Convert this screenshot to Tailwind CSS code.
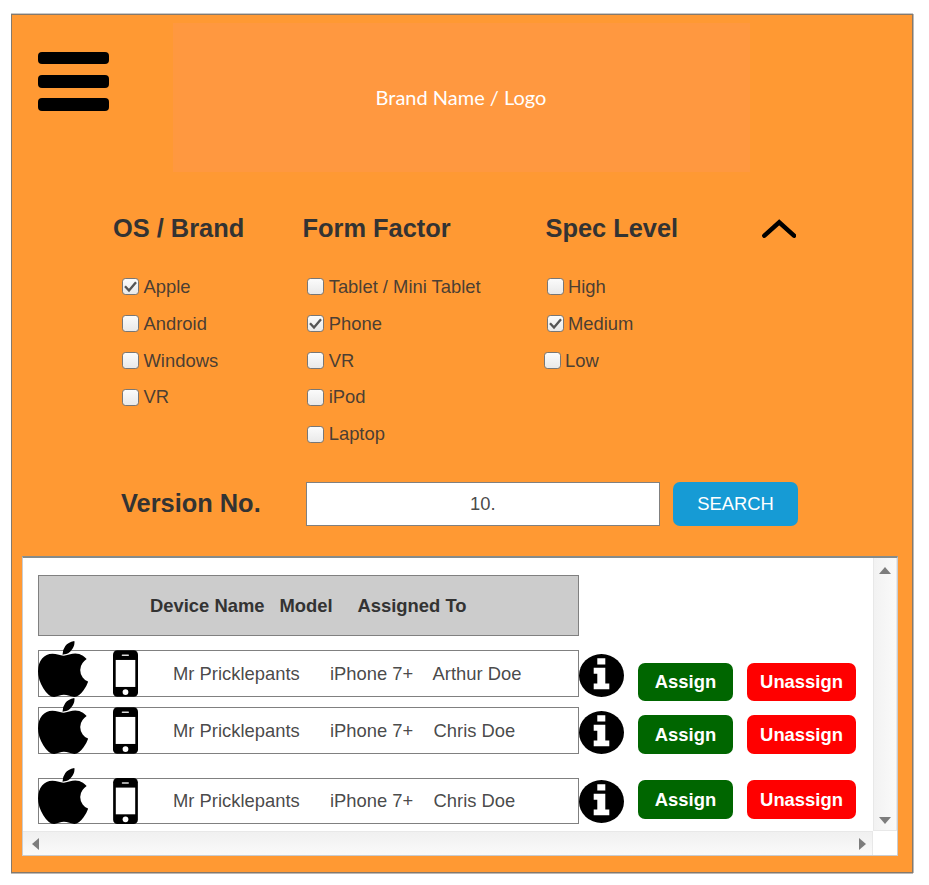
<!DOCTYPE html>
<html lang="en">
<head>
<meta charset="utf-8">
<title>Device search</title>
<script src="https://cdn.jsdelivr.net/npm/@tailwindcss/browser@4"></script>
</head>
<body class="bg-white w-[929px] h-[885px] overflow-hidden pl-[11px] pt-[14px] font-['Liberation_Sans',Arial,sans-serif] text-[18.4px] leading-[24px] text-[#333333]/90 whitespace-nowrap">

<!-- shared icon shapes -->
<svg class="hidden">
  <symbol id="apple" viewBox="0 0 1393 1664" preserveAspectRatio="none"><path d="M1393 1215q-39 125-123 250-129 196-257 196-49 0-140-32-86-32-151-32-61 0-142 33-81 34-132 34-152 0-301-259Q0 1144 0 900q0-230 114-377 113-145 288-145 73 0 180 30 106 30 140 30 45 0 143-34 102-34 173-34 119 0 213 65 52 36 104 100-79 67-114 118-65 94-65 207 0 124 69 223t158 126zM1017 42q0 61-29 136-30 75-93 138-54 54-108 72-37 11-104 17 3-149 78-257Q835 41 1011 0q1 3 2.500 11t2.500 11q0 4 .5 10t.5 10z"/></symbol>
  <symbol id="phone" viewBox="0 0 25 46.500"><rect width="25" height="46.500" rx="4.300"/><rect x="2.700" y="9.700" width="19.600" height="27" fill="#fff"/><rect x="8.700" y="4.300" width="7.300" height="1.400" rx=".7" fill="#ddd"/><circle cx="12.500" cy="41.800" r="2.900" fill="#fff"/></symbol>
  <symbol id="info" viewBox="0 0 45 43"><ellipse cx="22.500" cy="21.500" rx="22.500" ry="21.500"/><path fill="#fff" d="M18.300 4.200h8v6.300h-8zM14.700 13.800h11.600v15.700h4v5.800H14.700v-5.800h3.600v-9.700h-3.600z"/></symbol>
  <symbol id="check" viewBox="0 0 17 17"><path d="M3 8.200 7 12.600 14 4.200" fill="none" stroke="#555" stroke-width="2.300"/></symbol>
</svg>

<main class="w-[902px] h-[859px] border border-[#85796c] bg-[#ff9933] shadow-[0_-1px_0_#c8c8c8,1px_0_0_#bdb9b5,0_1px_0_#bdb9b5]">

  <header class="flex h-[157px] pl-[25.5px]">
    <button class="flex flex-col gap-[10.900px] pt-[36.500px] w-[71.500px] mr-[64px]" aria-label="Menu">
      <span class="block w-full h-[12.600px] rounded-[4px] bg-black"></span>
      <span class="block w-full h-[12.600px] rounded-[4px] bg-black"></span>
      <span class="block w-full h-[12.600px] rounded-[4px] bg-black"></span>
    </button>
    <div class="mt-[8px] w-[577px] h-[149px] pb-[2px] bg-[#ff9840] flex items-center justify-center font-['Lato',sans-serif] text-[20px] text-white"><span class="-ml-px">Brand Name / Logo</span></div>
  </header>

  <section class="flex h-[310px] pt-[41.200px] pl-[101px]">
    <div class="w-[189.500px]">
      <h2 class="font-bold text-[25.400px] leading-[30px] h-[55.400px] text-[#333]">OS / Brand</h2>
      <div class="pl-[9px]">
        <label class="flex items-center h-[36.800px]"><span class="size-[17px] mr-[4.500px] rounded-[3.500px] border border-[#777] bg-linear-to-b from-[#fbfbfb] to-[#e9e9e9]"><svg class="size-[17px] -m-px"><use href="#check"/></svg></span><span>Apple</span></label>
        <label class="flex items-center h-[36.800px]"><span class="size-[17px] mr-[4.500px] rounded-[3.500px] border border-[#777] bg-linear-to-b from-[#fbfbfb] to-[#e9e9e9]"></span><span>Android</span></label>
        <label class="flex items-center h-[36.800px]"><span class="size-[17px] mr-[4.500px] rounded-[3.500px] border border-[#777] bg-linear-to-b from-[#fbfbfb] to-[#e9e9e9]"></span><span>Windows</span></label>
        <label class="flex items-center h-[36.800px]"><span class="size-[17px] mr-[4.500px] rounded-[3.500px] border border-[#777] bg-linear-to-b from-[#fbfbfb] to-[#e9e9e9]"></span><span>VR</span></label>
      </div>
    </div>
    <div class="w-[243px]">
      <h2 class="font-bold text-[25.400px] leading-[30px] h-[55.400px] text-[#333]">Form Factor</h2>
      <div class="pl-[4.700px]">
        <label class="flex items-center h-[36.800px]"><span class="size-[17px] mr-[4.500px] rounded-[3.500px] border border-[#777] bg-linear-to-b from-[#fbfbfb] to-[#e9e9e9]"></span><span>Tablet / Mini Tablet</span></label>
        <label class="flex items-center h-[36.800px]"><span class="size-[17px] mr-[4.500px] rounded-[3.500px] border border-[#777] bg-linear-to-b from-[#fbfbfb] to-[#e9e9e9]"><svg class="size-[17px] -m-px"><use href="#check"/></svg></span><span>Phone</span></label>
        <label class="flex items-center h-[36.800px]"><span class="size-[17px] mr-[4.500px] rounded-[3.500px] border border-[#777] bg-linear-to-b from-[#fbfbfb] to-[#e9e9e9]"></span><span>VR</span></label>
        <label class="flex items-center h-[36.800px]"><span class="size-[17px] mr-[4.500px] rounded-[3.500px] border border-[#777] bg-linear-to-b from-[#fbfbfb] to-[#e9e9e9]"></span><span>iPod</span></label>
        <label class="flex items-center h-[36.800px]"><span class="size-[17px] mr-[4.500px] rounded-[3.500px] border border-[#777] bg-linear-to-b from-[#fbfbfb] to-[#e9e9e9]"></span><span>Laptop</span></label>
      </div>
    </div>
    <div class="w-[216.500px]">
      <h2 class="font-bold text-[25.400px] leading-[30px] h-[55.400px] text-[#333]">Spec Level</h2>
      <div class="pl-[1px]">
        <label class="flex items-center h-[36.800px]"><span class="size-[17px] mr-[4.500px] rounded-[3.500px] border border-[#777] bg-linear-to-b from-[#fbfbfb] to-[#e9e9e9]"></span><span>High</span></label>
        <label class="flex items-center h-[36.800px]"><span class="size-[17px] mr-[4.500px] rounded-[3.500px] border border-[#777] bg-linear-to-b from-[#fbfbfb] to-[#e9e9e9]"><svg class="size-[17px] -m-px"><use href="#check"/></svg></span><span>Medium</span></label>
        <label class="flex items-center h-[36.800px] -ml-[3px]"><span class="size-[17px] mr-[4.500px] rounded-[3.500px] border border-[#777] bg-linear-to-b from-[#fbfbfb] to-[#e9e9e9]"></span><span>Low</span></label>
      </div>
    </div>
    <svg class="w-[34px] h-[20px] mt-[5.800px]" viewBox="0 0 34 20"><path d="M2.400 16.600 17.200 3.400 32 16.600" fill="none" stroke="#000" stroke-width="4.600" stroke-linecap="round"/></svg>
  </section>

  <section class="flex h-[74px]">
    <h2 class="font-bold text-[25.400px] leading-[42px] w-[185px] pl-[109px] mr-[109px] text-[#333]">Version No.</h2>
    <div class="w-[353.500px] h-[44px] shrink-0 border border-[#808080] bg-white flex items-center justify-center">10.</div>
    <button class="ml-[13.500px] w-[125px] h-[44px] rounded-[7px] bg-[#169bd5] text-white">SEARCH</button>
  </section>

  <section class="ml-[10px] w-[876px] h-[300px] bg-white border-t-2 border-t-[#858b8b] border-l border-r border-b border-[#c9ccd0] grid grid-cols-[850px_1fr] grid-rows-[273px_1fr]">
    <div class="pl-[15px] pt-[17px]">
      <div class="w-[541px] h-[61px] border border-[#808080] bg-[#cccccc] font-bold flex items-center text-[#333]">
        <span class="w-[129.500px] ml-[111px]">Device Name</span><span class="w-[78px]">Model</span><span>Assigned To</span>
      </div>

      <div class="flex h-[57px] mt-[14px] items-start">
        <div class="w-[541px] h-[47px] border border-[#808080] flex items-center">
          <svg class="w-[50px] h-[56px] -ml-px -mt-[10px] mr-[25px]"><use href="#apple"/></svg>
          <svg class="w-[25px] h-[47px] -my-px mr-[35px]"><use href="#phone"/></svg>
          <span class="w-[157px]">Mr Pricklepants</span><span class="w-[102.500px]">iPhone 7+</span><span>Arthur Doe</span>
        </div>
        <svg class="w-[45px] h-[43px] mt-[4px]"><use href="#info"/></svg>
        <button class="ml-[14px] mt-[13px] w-[95px] h-[38px] rounded-[7px] bg-[#006600] text-white font-bold">Assign</button>
        <button class="ml-[14px] mt-[13px] w-[109px] h-[38px] rounded-[7px] bg-[#ff0000] text-white font-bold">Unassign</button>
      </div>

      <div class="flex h-[71px] items-start">
        <div class="w-[541px] h-[47px] border border-[#808080] flex items-center">
          <svg class="w-[50px] h-[56px] -ml-px -mt-[10px] mr-[25px]"><use href="#apple"/></svg>
          <svg class="w-[25px] h-[47px] -my-px mr-[35px]"><use href="#phone"/></svg>
          <span class="w-[157px]">Mr Pricklepants</span><span class="w-[103.500px]">iPhone 7+</span><span>Chris Doe</span>
        </div>
        <svg class="w-[45px] h-[43px] mt-[4px]"><use href="#info"/></svg>
        <button class="ml-[14px] mt-[8px] w-[95px] h-[39px] rounded-[7px] bg-[#006600] text-white font-bold">Assign</button>
        <button class="ml-[14px] mt-[8px] w-[109px] h-[39px] rounded-[7px] bg-[#ff0000] text-white font-bold">Unassign</button>
      </div>

      <div class="flex h-[47px] items-start">
        <div class="w-[541px] h-[46px] border border-[#808080] flex items-center">
          <svg class="w-[50px] h-[56px] -ml-px -mt-[10px] mr-[25px]"><use href="#apple"/></svg>
          <svg class="w-[25px] h-[46px] -my-px mr-[35px]"><use href="#phone"/></svg>
          <span class="w-[157px]">Mr Pricklepants</span><span class="w-[103.500px]">iPhone 7+</span><span>Chris Doe</span>
        </div>
        <svg class="w-[45px] h-[43px] mt-[2px]"><use href="#info"/></svg>
        <button class="ml-[14px] mt-[2px] w-[95px] h-[39px] rounded-[7px] bg-[#006600] text-white font-bold">Assign</button>
        <button class="ml-[14px] mt-[2px] w-[109px] h-[39px] rounded-[7px] bg-[#ff0000] text-white font-bold">Unassign</button>
      </div>
    </div>

    <div class="flex flex-col justify-between items-center border border-t-0 border-[#e8e8e8] bg-linear-to-r from-[#f2f2f2] to-[#fafafa] pt-[9px] pb-[6px]">
      <svg class="w-[12px] h-[7px]" viewBox="0 0 12 7"><path d="M0 7 6 0l6 7z" fill="#7d7d7d"/></svg>
      <svg class="w-[12px] h-[7px]" viewBox="0 0 12 7"><path d="M0 0h12L6 7z" fill="#7d7d7d"/></svg>
    </div>
    <div class="flex justify-between items-center border border-l-0 border-b-0 border-[#e8e8e8] bg-linear-to-b from-[#f0f0f0] to-[#fafafa] pl-[9px] pr-[6px]">
      <svg class="w-[7px] h-[12px]" viewBox="0 0 7 12"><path d="M7 0v12L0 6z" fill="#7d7d7d"/></svg>
      <svg class="w-[7px] h-[12px]" viewBox="0 0 7 12"><path d="M0 0v12l7-6z" fill="#7d7d7d"/></svg>
    </div>
    <div class="bg-white"></div>
  </section>
</main>
</body>
</html>
